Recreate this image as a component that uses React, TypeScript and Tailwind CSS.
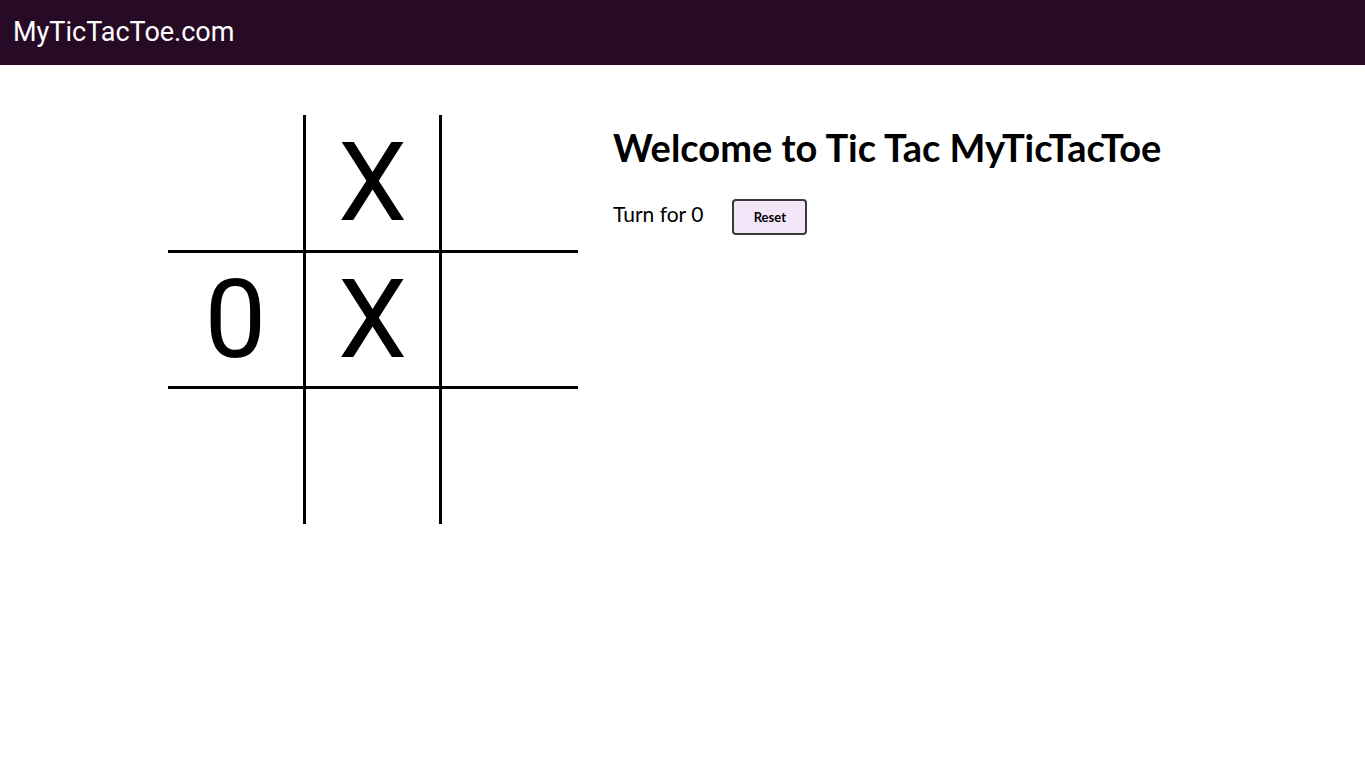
const board: string[] = ["", "X", "", "0", "X", "", "", "", ""];

const cellClass = [
  "w-[135px] h-[135px]",
  "w-[139px] h-[135px] border-l-[3px] border-r-[3px] border-black",
  "w-[136px] h-[135px]",
  "w-[135px] h-[139px] border-t-[3px] border-b-[3px] border-black",
  "w-[139px] h-[139px] border-[3px] border-black",
  "w-[136px] h-[139px] border-t-[3px] border-b-[3px] border-black",
  "w-[135px] h-[135px]",
  "w-[139px] h-[135px] border-l-[3px] border-r-[3px] border-black",
  "w-[136px] h-[135px]",
];

const Board = () => {
  return (
    <div className="grid grid-cols-[135px_139px_136px] w-[410px]">
      {board.map((value, i) => (
        <div
          key={i}
          className={`${cellClass[i]} flex items-center justify-center text-[110px] leading-none text-black font-['Roboto',sans-serif]`}
        >
          {value}
        </div>
      ))}
    </div>
  );
};

export default function App() {
  return (
    <div className="min-h-[767px] bg-white">
      <header className="h-[65px] bg-[#270a26] flex items-center px-[13px]">
        <div className="text-white text-[27px] font-['Roboto',sans-serif]">MyTicTacToe.com</div>
      </header>
      <main className="flex gap-[35px] pl-[168px] pt-[50px]">
        <Board />
        <div className="flex flex-col pt-[9px] font-['Lato',sans-serif] text-black">
          <h1 className="text-[38px] font-bold leading-[46px]">Welcome to Tic Tac MyTicTacToe</h1>
          <div className="flex items-center mt-[28px] gap-[29px]">
            <span className="text-[21px] mb-[7px]">Turn for 0</span>
            <button className="w-[75px] h-[36px] bg-[#f3e6f8] border-2 border-[#3a3a3a] rounded-[4px] text-[13px] font-bold">
              Reset
            </button>
          </div>
        </div>
      </main>
    </div>
  );
}
